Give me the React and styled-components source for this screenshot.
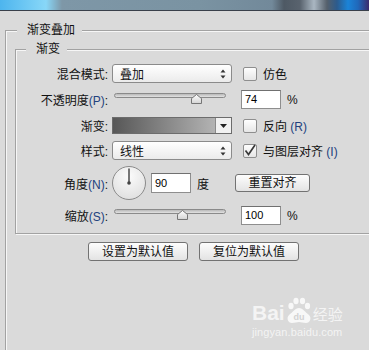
import React from 'react';
import styled, { createGlobalStyle } from 'styled-components';

const GlobalStyle = createGlobalStyle`
  html, body { margin: 0; padding: 0; }
  body {
    width: 369px;
    height: 350px;
    overflow: hidden;
    background: #dadada;
    font-family: "Liberation Sans", "Noto Sans CJK SC", sans-serif;
    font-size: 12px;
    color: #111;
  }
`;

const Page = styled.div`
  position: relative;
  width: 369px;
  height: 350px;
  overflow: hidden;
`;

// blurred window chrome at the very top of the crop
const TopStrip = styled.div`
  height: 10px;
  border-bottom: 1px solid #39404a;
  background: linear-gradient(90deg, #4db5ee 0px, #88d7f8 46px, #7e97a7 62px, #7a93a2 200px, #72899a 272px,
    #4e5964 284px, #59636e 300px, #aab7c2 314px, #55606b 327px, #2c5b8d 337px, #1b84d8 348px, #2068ba 358px, #3c2b6d 369px);
`;

const GroupBox = styled.div`
  border: 1px solid #a2a2a2;
  box-shadow: inset 1px 1px 0 #f6f6f6, 1px 1px 0 #f6f6f6;
`;

const OuterBox = styled(GroupBox)`
  margin: 19px 0 0 5px;
  width: 420px;
  height: 400px;
`;

const InnerBox = styled(GroupBox)`
  margin: 11px 0 0 9px;
  width: 400px;
  padding: 0 0 6px;
`;

const Title = styled.div`
  width: fit-content;
  margin: -9px 0 0 ${p => p.$indent}px;
  padding: 0 7px 0 10px;
  line-height: 16px;
  background: #dadada;
`;

const Rows = styled.div`
  padding-top: 3px;
`;

const Row = styled.div`
  display: flex;
  align-items: center;
  height: ${p => p.$h}px;
`;

const Label = styled.span`
  flex: none;
  width: 92px;
  margin-right: 4px;
  text-align: right;
  white-space: nowrap;
`;

const Key = styled.span`
  color: #22427e;
`;

const Select = styled.div`
  box-sizing: border-box;
  width: 120px;
  height: 19px;
  display: flex;
  align-items: center;
  justify-content: space-between;
  padding: 0 5px 0 7px;
  border: 1px solid #8b8b8b;
  border-radius: 3px;
  background: linear-gradient(#ffffff, #ebebeb);
`;

const CheckLabel = styled.label`
  display: flex;
  align-items: center;
  gap: 6px;
  margin-left: 11px;
  white-space: nowrap;
`;

const Box = styled.span`
  box-sizing: border-box;
  width: 14px;
  height: 14px;
  display: flex;
  align-items: center;
  justify-content: center;
  border: 1px solid #8e8e8e;
  border-radius: 2px;
  background: linear-gradient(#fefefe, #e6e6e6);
  overflow: visible;
`;

const Slider = styled.div`
  position: relative;
  box-sizing: border-box;
  width: 120px;
  height: 19px;
  padding: 3px 6px 0 2px;
`;

const Track = styled.div`
  height: 5px;
  box-sizing: border-box;
  border: 1px solid #8a8a8a;
  border-radius: 3px;
  background: linear-gradient(#b9b9b9, #e2e2e2);
`;

const Thumb = styled.svg`
  position: absolute;
  top: 4px;
`;

const NumBox = styled.div`
  box-sizing: border-box;
  width: 40px;
  height: ${p => p.$h || 19}px;
  margin-left: ${p => p.$ml}px;
  padding-left: 3px;
  border: 1px solid #8e8e8e;
  border-top-color: #707070;
  background: #fff;
  font-size: 11px;
  line-height: ${p => (p.$h || 19) - 2}px;
  color: #000;
`;

const Unit = styled.span`
  margin-left: 6px;
`;

const GradientPicker = styled.div`
  box-sizing: border-box;
  width: 120px;
  height: 17px;
  display: flex;
  border: 1px solid #6c6c6c;
`;

const Swatch = styled.div`
  flex: 1;
  background: linear-gradient(90deg, #575757, #b3b3b3);
`;

const DropBtn = styled.div`
  width: 15px;
  display: flex;
  align-items: center;
  justify-content: center;
  border-left: 1px solid #8a8a8a;
  background: #f1f1f1;
`;

const Button = styled.button`
  box-sizing: border-box;
  width: ${p => p.$w}px;
  height: ${p => p.$h}px;
  margin-left: ${p => p.$ml || 0}px;
  padding: 0;
  border: 1px solid #727272;
  border-radius: 3px;
  background: linear-gradient(#fdfdfd, #e3e3e3);
  font: inherit;
  color: #111;
  line-height: 1;
`;

const ButtonRow = styled.div`
  display: flex;
  gap: 11px;
  margin: 8px 0 0 82px;
`;

const Watermark = styled.div`
  position: absolute;
  left: 252px;
  top: 296px;
  color: rgba(255, 255, 255, 0.72);
`;

const Brand = styled.div`
  display: flex;
  align-items: flex-end;
  height: 28px;
`;

const BrandBai = styled.span`
  font-family: "Liberation Sans", sans-serif;
  font-weight: bold;
  font-size: 21px;
  line-height: 22px;
`;

const BrandCn = styled.span`
  font-family: "Noto Sans CJK SC", sans-serif;
  font-size: 15px;
  line-height: 20px;
`;

const BrandUrl = styled.div`
  margin-top: 2px;
  font-size: 11px;
  line-height: 12px;
  letter-spacing: 0.1px;
`;

const Arrows = () => (
  <svg width="6" height="10" viewBox="0 0 6 10">
    <path d="M3 0.5 L5.5 3.5 L0.5 3.5 Z" fill="#333" />
    <path d="M3 9.5 L5.5 6.5 L0.5 6.5 Z" fill="#333" />
  </svg>
);

const Check = () => (
  <svg width="14" height="14" viewBox="0 0 14 14" style={{ overflow: 'visible' }}>
    <path d="M2.5 6.5 L5.5 10.5 L12 1" fill="none" stroke="#3a3a3a" strokeWidth="1.7" />
  </svg>
);

const CheckItem = ({ checked, children }) => (
  <CheckLabel>
    <Box>{checked && <Check />}</Box>
    <span>{children}</span>
  </CheckLabel>
);

const Range = ({ pos }) => (
  <Slider>
    <Track />
    <Thumb width="11" height="10" viewBox="0 0 11 10" style={{ left: 2 + pos * 112 - 5.5 }}>
      <defs>
        <linearGradient id="tg" x1="0" y1="0" x2="0" y2="1">
          <stop offset="0" stopColor="#ffffff" />
          <stop offset="1" stopColor="#d4d4d4" />
        </linearGradient>
      </defs>
      <path d="M0.5 4.5 L5.5 0.5 L10.5 4.5 L10.5 9.5 L0.5 9.5 Z" fill="url(#tg)" stroke="#767676" />
    </Thumb>
  </Slider>
);

const Dial = () => (
  <svg width="34" height="34" viewBox="0 0 34 34">
    <defs>
      <radialGradient id="dg" cx="0.5" cy="0.3" r="0.7">
        <stop offset="0" stopColor="#fbfbfb" />
        <stop offset="1" stopColor="#e0e0e0" />
      </radialGradient>
    </defs>
    <circle cx="17" cy="17" r="16.5" fill="url(#dg)" stroke="#8a8a8a" />
    <line x1="17" y1="17" x2="17" y2="2.5" stroke="#555" strokeWidth="1.6" />
    <circle cx="17" cy="17" r="1.8" fill="#444" />
  </svg>
);

const Paw = () => (
  <svg width="28" height="27" viewBox="0 0 28 27">
    <g fill="rgba(255,255,255,0.8)">
      <ellipse cx="6" cy="9" rx="2.6" ry="3.2" />
      <ellipse cx="11" cy="4" rx="2.6" ry="3.2" />
      <ellipse cx="17.5" cy="4" rx="2.6" ry="3.2" />
      <ellipse cx="22.5" cy="9" rx="2.6" ry="3.2" />
      <path d="M14 11 C18 11 20 15 24 18 C27 21 25 26 21 26 C18 26 16 25 14 25 C12 25 10 26 7 26 C3 26 1 21 4 18 C8 15 10 11 14 11 Z" />
    </g>
    <text x="14" y="23" textAnchor="middle" fontFamily="Liberation Sans, sans-serif" fontWeight="bold" fontSize="9" fill="#d2d2d2">du</text>
  </svg>
);

export default function App() {
  return (
    <Page>
      <GlobalStyle />
      <TopStrip />
      <OuterBox>
        <Title $indent={11}>渐变叠加</Title>
        <InnerBox>
          <Title $indent={10}>渐变</Title>
          <Rows>
            <Row $h={27}>
              <Label>混合模式:</Label>
              <Select>
                <span>叠加</span>
                <Arrows />
              </Select>
              <CheckItem>仿色</CheckItem>
            </Row>
            <Row $h={25}>
              <Label>不透明度<Key>(P)</Key>:</Label>
              <Range pos={0.74} />
              <NumBox $ml={9}>74</NumBox>
              <Unit>%</Unit>
            </Row>
            <Row $h={27}>
              <Label>渐变:</Label>
              <GradientPicker>
                <Swatch />
                <DropBtn>
                  <svg width="7" height="4" viewBox="0 0 7 4">
                    <path d="M0 0 L7 0 L3.5 4 Z" fill="#222" />
                  </svg>
                </DropBtn>
              </GradientPicker>
              <CheckItem>反向 <Key>(R)</Key></CheckItem>
            </Row>
            <Row $h={23}>
              <Label>样式:</Label>
              <Select>
                <span>线性</span>
                <Arrows />
              </Select>
              <CheckItem checked>与图层对齐 <Key>(I)</Key></CheckItem>
            </Row>
            <Row $h={42}>
              <Label>角度<Key>(N)</Key>:</Label>
              <Dial />
              <NumBox $ml={5} $h={20}>90</NumBox>
              <Unit>度</Unit>
              <Button $w={75} $h={18} $ml={26}>重置对齐</Button>
            </Row>
            <Row $h={23}>
              <Label>缩放<Key>(S)</Key>:</Label>
              <Range pos={0.61} />
              <NumBox $ml={9}>100</NumBox>
              <Unit>%</Unit>
            </Row>
          </Rows>
        </InnerBox>
        <ButtonRow>
          <Button $w={100} $h={19}>设置为默认值</Button>
          <Button $w={100} $h={19}>复位为默认值</Button>
        </ButtonRow>
      </OuterBox>
      <Watermark>
        <Brand>
          <BrandBai>Bai</BrandBai>
          <Paw />
          <BrandCn>经验</BrandCn>
        </Brand>
        <BrandUrl>jingyan.baidu.com</BrandUrl>
      </Watermark>
    </Page>
  );
}
